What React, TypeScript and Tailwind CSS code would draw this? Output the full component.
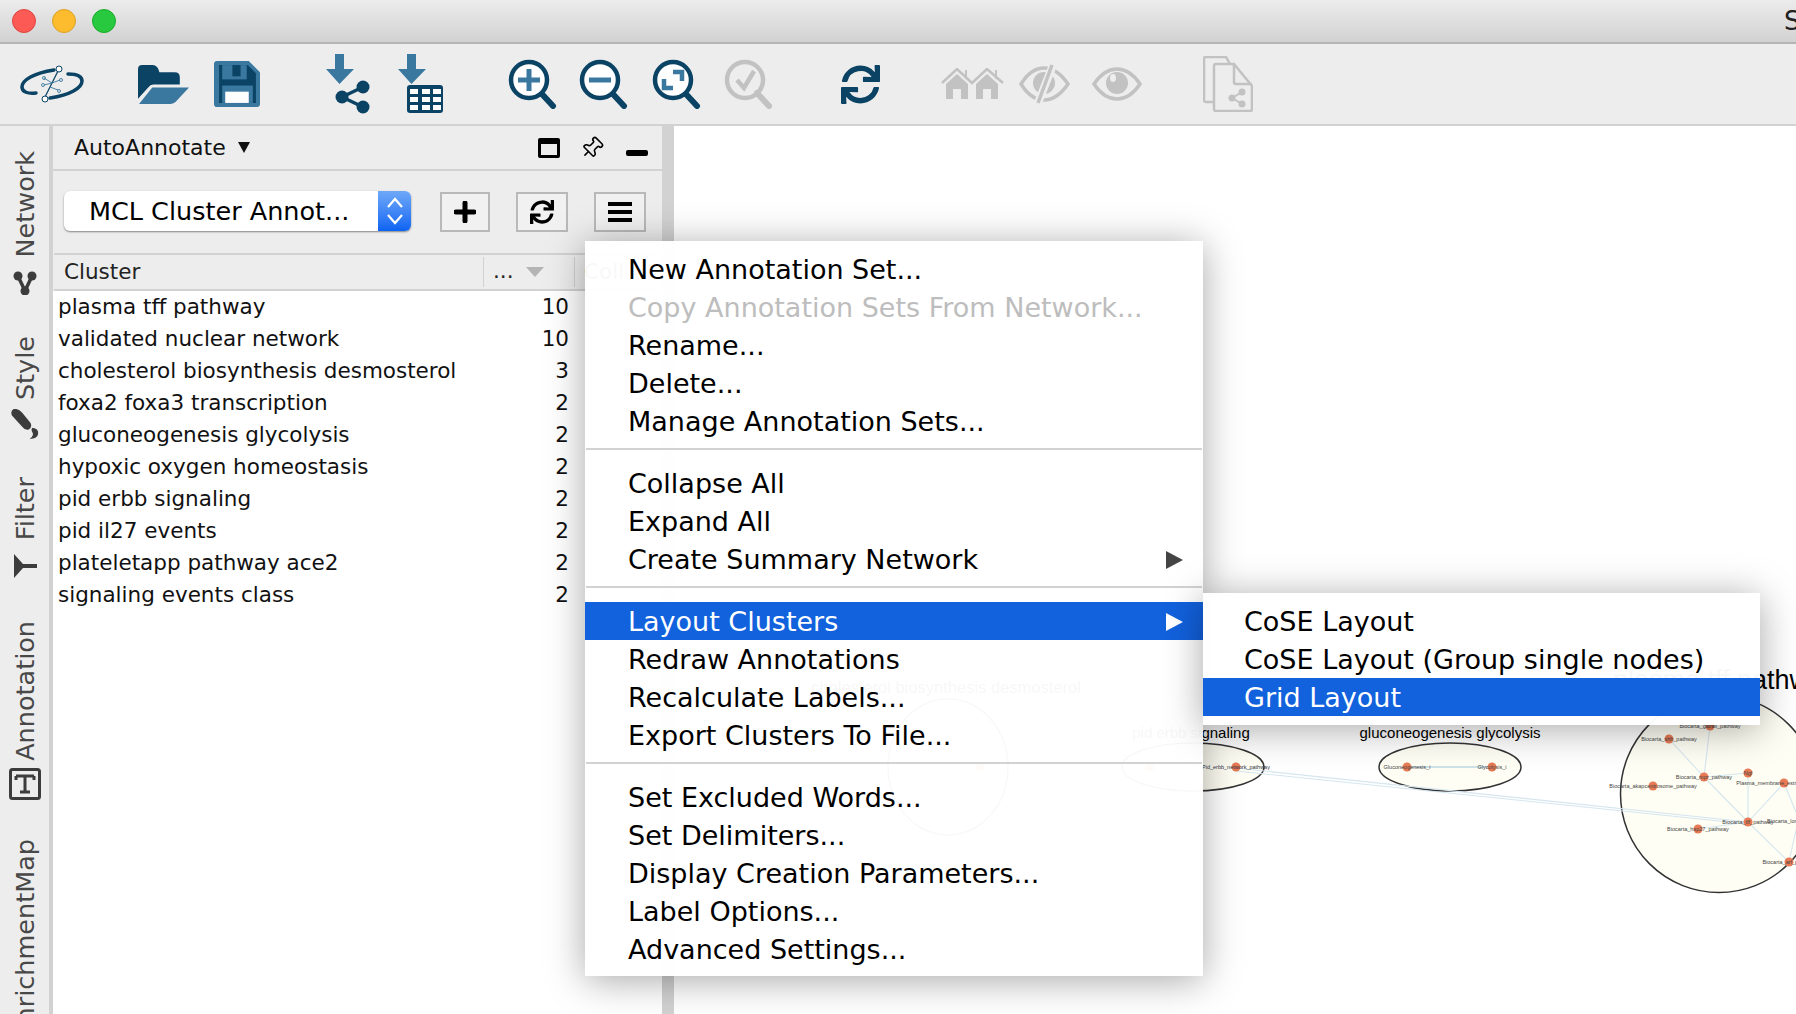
import { FaSync } from 'react-icons/fa';
import { Pin } from 'lucide-react';

const DARK = '#0b4365';
const MID = '#3a78a0';
const GRAY = '#c2c2c2';
const NODE = '#e87b55';

const clusters: [string, number][] = [
    ['plasma tff pathway', 10],
    ['validated nuclear network', 10],
    ['cholesterol biosynthesis desmosterol', 3],
    ['foxa2 foxa3 transcription', 2],
    ['gluconeogenesis glycolysis', 2],
    ['hypoxic oxygen homeostasis', 2],
    ['pid erbb signaling', 2],
    ['pid il27 events', 2],
    ['plateletapp pathway ace2', 2],
    ['signaling events class', 2],
];

const Magnifier = ({ color, fill, children }: { color: string; fill: string; children?: React.ReactNode }) => (
    <svg viewBox="0 0 50 50" className="w-[50px] h-[50px] shrink-0">
        <line x1="33" y1="34" x2="45" y2="47" stroke={color} strokeWidth="6" strokeLinecap="round" />
        <circle cx="21" cy="21" r="18" fill={fill} stroke={color} strokeWidth="4.5" />
        {children}
    </svg>
);

const Logo = () => (
    <svg viewBox="0 0 64 38" className="w-[64px] h-[38px] shrink-0">
        <path d="M34 5 C14 8 2 15 2 22 C2 27 8 29 16 28" fill="none" stroke={DARK} strokeWidth="3.5" strokeLinecap="round" />
        <path d="M30 33 C50 30 62 23 62 16 C62 11 56 9 48 9" fill="none" stroke={DARK} strokeWidth="3.5" strokeLinecap="round" />
        <line x1="38" y1="6" x2="25" y2="32" stroke={DARK} strokeWidth="1.2" />
        <g fill="#fff" stroke={DARK} strokeWidth="1">
            <circle cx="39" cy="4" r="3" />
            <circle cx="25" cy="34" r="3" />
        </g>
        <g fill="none" stroke={MID} strokeWidth="0.9">
            <path d="M32 18 L24 13 M32 18 L24 20 M32 18 L40 15 M30 22 L38 25" />
            <circle cx="24" cy="13" r="1.5" />
            <circle cx="23" cy="20" r="1.5" />
            <circle cx="41" cy="15" r="1.5" />
            <circle cx="39" cy="26" r="1.5" />
        </g>
    </svg>
);

const OpenFolder = () => (
    <svg viewBox="0 0 50 38" className="w-[51px] h-[41px] shrink-0">
        <path d="M0 4 Q0 0 4 0 H14 Q18 0 20 4 L21 7 H36 Q41 7 41 12 V19 H15 Q12 19 10 22 L0 33 Z" fill={DARK} />
        <path d="M14 22 H50 L37 36 Q35 38 32 38 H1 Z" fill={MID} />
    </svg>
);

const Save = () => (
    <svg viewBox="0 0 45 45" className="w-[46px] h-[46px] shrink-0">
        <path d="M3 0 H34 L45 11 V42 Q45 45 42 45 H3 Q0 45 0 42 V3 Q0 0 3 0 Z" fill={MID} />
        <path d="M5 4 H33 L41 12 V41 H5 Z" fill={DARK} />
        <rect x="8" y="4" width="24" height="14" fill={MID} />
        <rect x="18" y="4" width="8" height="11" fill={DARK} />
        <rect x="8" y="24" width="30" height="17" fill={MID} />
        <rect x="11" y="30" width="23" height="11" fill="#fff" />
    </svg>
);

const ImportNetwork = () => (
    <svg viewBox="0 0 47 60" className="w-[47px] h-[60px] shrink-0">
        <path d="M10 0 H19 V15 H29 L14.5 30 L1 15 H10 Z" fill={MID} />
        <g stroke={DARK} strokeWidth="3.5">
            <line x1="17" y1="43" x2="38" y2="33" />
            <line x1="17" y1="43" x2="38" y2="53" />
        </g>
        <circle cx="17" cy="43" r="6.5" fill={DARK} />
        <circle cx="38" cy="33" r="6.5" fill={DARK} />
        <circle cx="38" cy="53" r="6.5" fill={DARK} />
    </svg>
);

const ImportTable = () => (
    <svg viewBox="0 0 47 60" className="w-[47px] h-[60px] shrink-0">
        <path d="M10 0 H19 V15 H29 L14.5 30 L1 15 H10 Z" fill={MID} />
        <rect x="10" y="31" width="36" height="28" rx="3" fill={DARK} />
        <g fill="#fff">
            {[13, 25, 36].map((x) =>
                [35, 43, 51].map((y) => <rect key={`${x}-${y}`} x={x} y={y} width="8" height="5" />)
            )}
        </g>
    </svg>
);

const Houses = () => (
    <svg viewBox="0 0 63 32" className="w-[63px] h-[32px] shrink-0" fill={GRAY}>
        <path d="M1 15 L16 1 L31 15 L46 1 L62 15" fill="none" stroke={GRAY} strokeWidth="2.5" />
        <path d="M5 16 L16 6 L27 16 V31 H20 V21 H12 V31 H5 Z" />
        <path d="M35 16 L46 6 L57 16 V31 H50 V21 H42 V31 H35 Z" />
        <rect x="24" y="2" width="2" height="9" />
        <rect x="54" y="2" width="2" height="9" />
    </svg>
);

const EyeOff = () => (
    <svg viewBox="0 0 51 40" className="w-[51px] h-[40px] shrink-0">
        <path d="M2 20 Q12 4 25 4 Q38 4 49 20 Q38 36 25 36 Q12 36 2 20 Z" fill="none" stroke={GRAY} strokeWidth="3.5" />
        <circle cx="25" cy="19" r="11" fill={GRAY} />
        <line x1="34" y1="1" x2="19" y2="39" stroke="#ededed" strokeWidth="8" />
        <line x1="33" y1="1" x2="19" y2="39" stroke={GRAY} strokeWidth="3.5" />
    </svg>
);

const Eye = () => (
    <svg viewBox="0 0 50 34" className="w-[50px] h-[34px] shrink-0">
        <path d="M2 17 Q12 2 25 2 Q38 2 48 17 Q38 32 25 32 Q12 32 2 17 Z" fill="none" stroke={GRAY} strokeWidth="3.5" />
        <circle cx="25" cy="16" r="11" fill={GRAY} />
        <ellipse cx="21" cy="11" rx="3" ry="4" fill="#ededed" />
    </svg>
);

const SharedDocs = () => (
    <svg viewBox="0 0 50 56" className="w-[50px] h-[56px] shrink-0">
        <path d="M12 46 H3 Q1 46 1 44 V3 Q1 1 3 1 H23 L27 8" fill="none" stroke={GRAY} strokeWidth="2.5" />
        <path d="M13 55 Q11 55 11 53 V10 Q11 8 13 8 H31 L49 30 V53 Q49 55 47 55 Z" fill="#ededed" stroke={GRAY} strokeWidth="2.5" />
        <path d="M31 8 V26 Q31 28 33 28 H49" fill="none" stroke={GRAY} strokeWidth="2.5" />
        <g stroke={GRAY} strokeWidth="2">
            <line x1="29" y1="42" x2="39" y2="36" />
            <line x1="29" y1="42" x2="39" y2="48" />
        </g>
        <circle cx="29" cy="42" r="3.5" fill={GRAY} />
        <circle cx="39" cy="36" r="3.5" fill={GRAY} />
        <circle cx="39" cy="48" r="3.5" fill={GRAY} />
    </svg>
);

const Toolbar = () => (
    <div className="h-[82px] shrink-0 bg-[#ededed] border-b-2 border-[#d2d2d2] flex items-center pl-[20px]">
        <Logo />
        <div className="ml-[54px] flex"><OpenFolder /></div>
        <div className="ml-[25px] flex"><Save /></div>
        <div className="ml-[65px] flex"><ImportNetwork /></div>
        <div className="ml-[25px] flex"><ImportTable /></div>
        <div className="ml-[64px] flex">
            <Magnifier color={DARK} fill="#fff">
                <path d="M21 10 V32 M10 21 H32" stroke={MID} strokeWidth="5" />
            </Magnifier>
        </div>
        <div className="ml-[21px] flex">
            <Magnifier color={DARK} fill="#fff">
                <path d="M10 21 H32" stroke={MID} strokeWidth="5" />
            </Magnifier>
        </div>
        <div className="ml-[23px] flex">
            <Magnifier color={DARK} fill="#fff">
                <path d="M21 13 H30 V22 M12 20 V29 H21" fill="none" stroke={MID} strokeWidth="4.5" />
            </Magnifier>
        </div>
        <div className="ml-[22px] flex">
            <Magnifier color={GRAY} fill="none">
                <path d="M13 21 L20 29 L30 12" fill="none" stroke={GRAY} strokeWidth="4.5" />
            </Magnifier>
        </div>
        <FaSync className="ml-[67px] w-[39px] h-[39px] shrink-0 text-[#0b4365]" />
        <div className="ml-[61px] flex"><Houses /></div>
        <div className="ml-[15px] flex"><EyeOff /></div>
        <div className="ml-[22px] flex"><Eye /></div>
        <div className="ml-[61px] flex"><SharedDocs /></div>
    </div>
);

const SideTab = ({ label, className, children }: { label: string; className: string; children?: React.ReactNode }) => (
    <div className={`flex flex-col items-center shrink-0 ${className}`}>
        <span className="[writing-mode:vertical-rl] rotate-180 text-[25.5px] leading-[30px] text-[#484848] whitespace-nowrap">{label}</span>
        {children}
    </div>
);

const Sidebar = () => (
    <div className="w-[53px] shrink-0 bg-[#ededed] border-r-[4px] border-[#d2d2d2] flex flex-col items-center overflow-hidden">
        <SideTab label="Network" className="mt-[25px]">
            <svg viewBox="0 0 24 24" className="w-[24px] h-[24px] mt-[14px]" fill="#3c3c3c">
                <circle cx="5" cy="5" r="4.5" />
                <circle cx="19" cy="5" r="4.5" />
                <circle cx="12" cy="20" r="4.5" />
                <path d="M5 5 L12 20 L19 5" fill="none" stroke="#3c3c3c" strokeWidth="3.5" />
            </svg>
        </SideTab>
        <SideTab label="Style" className="mt-[41px]">
            <svg viewBox="0 0 30 32" className="w-[28px] h-[30px] mt-[8px]" fill="#3c3c3c">
                <path d="M3 0 Q8 -1 12 4 L21 15 Q23 20 19 22 Q15 23 12 19 L1 7 Q-1 2 3 0 Z" />
                <path d="M23 20 Q30 21 29 27 Q28 32 20 32 Q25 28 23 25 Q21 22 23 20 Z" />
            </svg>
        </SideTab>
        <SideTab label="Filter" className="mt-[38px]">
            <svg viewBox="0 0 24 24" className="w-[24px] h-[24px] mt-[14px]" fill="#3c3c3c">
                <path d="M1 0 V24 L10 14 H24 V10 H10 Z" />
            </svg>
        </SideTab>
        <SideTab label="Annotation" className="mt-[43px]">
            <svg viewBox="0 0 32 32" className="w-[32px] h-[32px] mt-[7px]" fill="none" stroke="#3c3c3c">
                <rect x="1.5" y="1.5" width="29" height="29" rx="2" strokeWidth="3" />
                <path d="M7 8 H25 M16 8 V24 M11 24 H21 M7 8 V12 M25 8 V12" strokeWidth="3" />
            </svg>
        </SideTab>
        <SideTab label="EnrichmentMap" className="mt-[39px]" />
    </div>
);

const Panel = () => (
    <div className="w-[609px] shrink-0 bg-[#ededed] flex flex-col">
        <div className="h-[45px] shrink-0 border-b-2 border-[#d2d2d2] flex items-center pl-[21px] pr-[14px]">
            <span className="text-[22px] text-[#111]">AutoAnnotate</span>
            <span className="ml-[12px] w-0 h-0 border-x-[6px] border-x-transparent border-t-[11px] border-t-[#111]"></span>
            <span className="ml-auto w-[22px] h-[20px] border-[3px] border-t-[6px] border-black rounded-[2px]"></span>
            <Pin className="ml-[20px] w-[24px] h-[24px] rotate-45 text-black" strokeWidth={1.6} />
            <span className="ml-[22px] mt-[10px] w-[22px] h-[6px] bg-black rounded-[2px]"></span>
        </div>
        <div className="h-[82px] shrink-0 flex items-center pl-[11px]">
            <div className="-mt-[2px] w-[347px] h-[40px] rounded-[6px] bg-white shadow-[0_1px_2px_rgba(0,0,0,0.45)] flex overflow-hidden">
                <span className="flex-1 pl-[25px] text-[25.5px] leading-[40px] text-black whitespace-nowrap">MCL Cluster Annot...</span>
                <span className="w-[33px] bg-gradient-to-b from-[#6ea8f8] to-[#0a63f2] flex items-center justify-center">
                    <svg viewBox="0 0 18 32" className="w-[18px] h-[32px]" fill="none" stroke="#fff" strokeWidth="2.2">
                        <path d="M2 12 L9 4 L16 12 M2 20 L9 28 L16 20" />
                    </svg>
                </span>
            </div>
            <button className="ml-[29px] w-[50px] h-[40px] border-2 border-[#b9b9b9] bg-[#f1f1f1] flex items-center justify-center">
                <svg viewBox="0 0 22 22" className="w-[22px] h-[22px]"><path d="M11 2 V20 M2 11 H20" stroke="#000" strokeWidth="5" strokeLinecap="round" /></svg>
            </button>
            <button className="ml-[26px] w-[52px] h-[40px] border-2 border-[#b9b9b9] bg-[#f1f1f1] flex items-center justify-center">
                <FaSync className="w-[24px] h-[24px] text-black" />
            </button>
            <button className="ml-[26px] w-[52px] h-[40px] border-2 border-[#b9b9b9] bg-[#f1f1f1] flex flex-col items-center justify-center gap-[4px]">
                <span className="w-[24px] h-[4px] bg-black"></span>
                <span className="w-[24px] h-[4px] bg-black"></span>
                <span className="w-[24px] h-[4px] bg-black"></span>
            </button>
        </div>
        <div className="h-[38px] shrink-0 border-y-2 border-[#d2d2d2] flex items-center text-[21.5px] text-[#222] ml-[1px]">
            <span className="w-[429px] pl-[10px]">Cluster</span>
            <span className="w-[1px] h-[30px] bg-[#d2d2d2]"></span>
            <span className="w-[42px] pl-[9px] -mt-[2px]">...</span>
            <span className="w-0 h-0 border-x-[9px] border-x-transparent border-t-[10px] border-t-[#b4b4b4]"></span>
            <span className="ml-[30px] w-[1px] h-[30px] bg-[#d2d2d2]"></span>
            <span className="pl-[9px]">Coll</span>
        </div>
        <div className="flex-1 bg-white pl-[5px]">
            {clusters.map(([name, count]) => (
                <div key={name} className="h-[32px] flex items-center text-[21.5px] text-[#111] whitespace-nowrap">
                    <span className="w-[511px]">{name}</span>
                    <span className="text-right w-[0px] flex justify-end">{count}</span>
                </div>
            ))}
        </div>
    </div>
);

const labels: [number, number, string][] = [
    [1710, 726, 'Biocarta_gazali_pathway'],
    [1669, 739, 'Biocarta_shh_pathway'],
    [1704, 777, 'Biocarta_mpr_pathway'],
    [1748, 773, 'Ngf'],
    [1653, 786, 'Biocarta_akapcentrosome_pathway'],
    [1784, 783, 'Plasma_membrane_estrogen_receptor'],
    [1748, 822, 'Biocarta_tff_pathway'],
    [1698, 829, 'Biocarta_hsp27_pathway'],
    [1789, 862, 'Biocarta_arf_pathway'],
];

const Network = () => (
    <svg viewBox="674 126 1122 888" className="absolute inset-0 w-full h-full" fontFamily="'Liberation Sans', sans-serif">
        <text x="946" y="693" fontSize="16.5" textAnchor="middle" fill="#000">cholesterol biosynthesis desmosterol</text>
        <ellipse cx="948" cy="767" rx="60" ry="68" fill="#fefef4" stroke="#333" strokeWidth="1.5" />
        <circle cx="980" cy="767" r="4.5" fill={NODE} />
        <text x="1191" y="738" fontSize="15" textAnchor="middle" fill="#000">pid erbb signaling</text>
        <ellipse cx="1193" cy="767" rx="71" ry="24" fill="#fefef4" stroke="#333" strokeWidth="1.5" />
        <circle cx="1150" cy="767" r="4.5" fill={NODE} />
        <text x="1450" y="738" fontSize="15" textAnchor="middle" fill="#000">gluconeogenesis glycolysis</text>
        <ellipse cx="1450" cy="767" rx="71" ry="24" fill="#fefef4" stroke="#333" strokeWidth="1.5" />
        <line x1="1407" y1="767" x2="1492" y2="767" stroke="#bcd8e4" strokeWidth="1.5" />
        <text x="1613" y="689" fontSize="27" fill="#000">plasma tff pathway</text>
        <circle cx="1719" cy="794" r="98.5" fill="#fefef4" stroke="#333" strokeWidth="1.5" />
        <g stroke="#d5e6ef" strokeWidth="1.1" fill="none">
            <path d="M1236 768 L1748 822 M1236 771 L1748 824" />
            <path d="M1710 726 L1704 777 M1669 739 L1704 777 M1704 777 L1748 773 M1704 777 L1748 822 M1748 773 L1748 822 M1748 822 L1784 783 M1748 822 L1698 829 M1748 822 L1789 862 M1784 783 L1796 812 M1789 862 L1796 830" />
        </g>
        <g fill={NODE}>
            <circle cx="1236" cy="767" r="4.5" />
            <circle cx="1407" cy="767" r="4.5" />
            <circle cx="1492" cy="767" r="4.5" />
            {labels.map(([x, y]) => <circle key={`${x}-${y}`} cx={x} cy={y} r="4.5" />)}
        </g>
        <text x="1236" y="769" fontSize="5.5" textAnchor="middle" fill="#334">Pid_erbb_network_pathway</text>
        <text x="1407" y="769" fontSize="5.5" textAnchor="middle" fill="#444">Gluconeogenesis_i</text>
        <text x="1492" y="769" fontSize="5.5" textAnchor="middle" fill="#444">Glycolysis_i</text>
        {labels.map(([x, y, t]) => (
            <text key={t} x={x} y={y + 2} fontSize="5.5" textAnchor="middle" fill="#444">{t}</text>
        ))}
        <text x="1767" y="823" fontSize="5.5" fill="#444">Biocarta_lon_pathway</text>
    </svg>
);

const MenuItem = ({ label, disabled, active, arrow }: { label: string; disabled?: boolean; active?: boolean; arrow?: boolean }) => (
    <div className={`h-[38px] flex items-center pl-[43px] pr-[20px] pt-[2px] text-[27px] whitespace-nowrap ${active ? 'bg-[#0a5cdc]/97 text-white' : disabled ? 'text-[#bdbdbd]' : 'text-black'}`}>
        <span className="flex-1">{label}</span>
        {arrow && (
            <span className={`w-0 h-0 border-y-[9px] border-y-transparent border-l-[17px] ${active ? 'border-l-white' : 'border-l-[#444]'}`}></span>
        )}
    </div>
);

const Separator = () => (
    <div className="h-[24px] pt-[8px] px-[1px]">
        <div className="w-full h-[2px] bg-[#d2d2d2]"></div>
    </div>
);

const ContextMenu = () => (
    <div className="absolute left-[585px] top-[241px] w-[618px] pt-[9px] pb-[8px] bg-white/97 shadow-[0_4px_36px_rgba(0,0,0,0.35)]">
        <MenuItem label="New Annotation Set..." />
        <MenuItem label="Copy Annotation Sets From Network..." disabled />
        <MenuItem label="Rename..." />
        <MenuItem label="Delete..." />
        <MenuItem label="Manage Annotation Sets..." />
        <Separator />
        <MenuItem label="Collapse All" />
        <MenuItem label="Expand All" />
        <MenuItem label="Create Summary Network" arrow />
        <Separator />
        <MenuItem label="Layout Clusters" active arrow />
        <MenuItem label="Redraw Annotations" />
        <MenuItem label="Recalculate Labels..." />
        <MenuItem label="Export Clusters To File..." />
        <Separator />
        <MenuItem label="Set Excluded Words..." />
        <MenuItem label="Set Delimiters..." />
        <MenuItem label="Display Creation Parameters..." />
        <MenuItem label="Label Options..." />
        <MenuItem label="Advanced Settings..." />
    </div>
);

const SubMenu = () => (
    <div className="absolute left-[1203px] top-[593px] w-[557px] py-[9px] bg-white/97 shadow-[0_4px_36px_rgba(0,0,0,0.35)]">
        <div className="h-[38px] flex items-center pl-[41px] pt-[2px] text-[27px] text-black whitespace-nowrap">CoSE Layout</div>
        <div className="h-[38px] flex items-center pl-[41px] pt-[2px] text-[27px] text-black whitespace-nowrap">CoSE Layout (Group single nodes)</div>
        <div className="h-[38px] flex items-center pl-[41px] pt-[2px] text-[27px] text-white whitespace-nowrap bg-[#0a5cdc]/97">Grid Layout</div>
    </div>
);

export default function App() {
    return (
        <div className="relative w-[1796px] h-[1014px] overflow-hidden flex flex-col bg-white font-['DejaVu_Sans',sans-serif]">
            <div className="h-[44px] shrink-0 bg-gradient-to-b from-[#ececec] to-[#d2d2d2] border-b-2 border-[#b4b4b4] flex items-center pl-[12px] gap-[16px]">
                <span className="w-[24px] h-[24px] shrink-0 rounded-full bg-[#fb5b54] border border-[#e0443e]"></span>
                <span className="w-[24px] h-[24px] shrink-0 rounded-full bg-[#fdbc2e] border border-[#dea123]"></span>
                <span className="w-[24px] h-[24px] shrink-0 rounded-full bg-[#28c83f] border border-[#1aab29]"></span>
                <span className="ml-[1652px] shrink-0 text-[26px] text-[#222]">S</span>
            </div>
            <Toolbar />
            <div className="flex-1 flex min-h-0">
                <Sidebar />
                <Panel />
                <div className="w-[12px] shrink-0 bg-[#d2d2d2]"></div>
                <div className="relative flex-1 bg-white">
                    <Network />
                </div>
            </div>
            <ContextMenu />
            <SubMenu />
        </div>
    );
}
